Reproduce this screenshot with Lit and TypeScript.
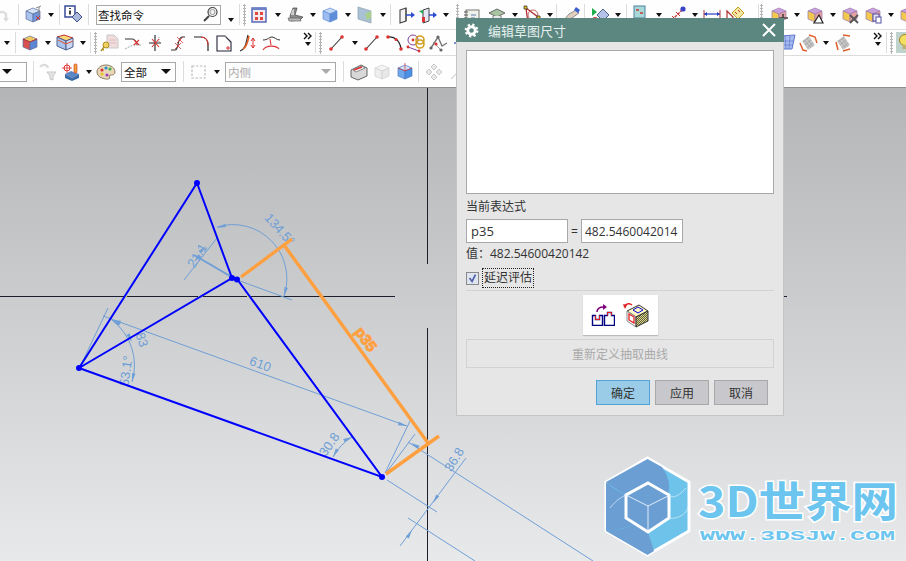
import { LitElement, html, css, svg } from 'lit';
import { customElement } from 'lit/decorators.js';

// little cube used by most of the toolbar glyphs
const cube = (top: string, left: string, right: string, line = '#5b6f9c') => svg`
  <path d="M2 5l7-3 7 3-7 3z" fill=${top} stroke=${line} stroke-width=".7"/>
  <path d="M2 5l7 3v8l-7-3z" fill=${left} stroke=${line} stroke-width=".7"/>
  <path d="M9 8l7-3v8l-7 3z" fill=${right} stroke=${line} stroke-width=".7"/>`;

const pcube = (extra: unknown) => svg`${cube('#c9a0dc', '#f2c94c', '#e8a0a0', '#9a7ab0')}${extra}`;

const ICONS: Record<string, unknown> = {
  undo: svg`<path d="M-3 9c3-4 7-4 9-1v5" fill="none" stroke="#dcdcdc" stroke-width="2.4"/><path d="M3 12h6l-3 4z" fill="#dcdcdc"/>`,
  cubedim: svg`${cube('#d5e2f8', '#a9c3ee', '#6f96da')}<path d="M12 2l5-2M15 1v8" stroke="#888" fill="none"/><path d="M12 10l4 4m0-4l-4 4" stroke="#c33" fill="none"/>`,
  info: svg`<rect x="1" y="0" width="10" height="11" fill="#fff" stroke="#2a3f8f" stroke-width="1.4"/><path d="M6 2v1M6 4.5v4" stroke="#111" stroke-width="1.6"/><path d="M8 11l5-5 5 5-5 5z" fill="#aab8dc" stroke="#41528a"/>`,
  cal: svg`<rect x="1" y="2" width="14" height="14" fill="#f3e9ee" stroke="#4a5fb4" stroke-width="1.4"/><rect x="1" y="2" width="14" height="2" fill="#6a80c8"/><path d="M4 6h3v3H4zM9 6h3v3H9zM4 11h3v3H4zM9 11h3v3H9z" fill="#e0483c"/>`,
  scan: svg`<path d="M4 10l3-8h4l-2 7 8 2-3 3-9 1z" fill="#8c8c8c" stroke="#444" stroke-width=".7"/><path d="M6 4l2-1v6H5z" fill="#cfcfcf"/><path d="M2 12h12l1 3H3z" fill="#b5b5b5" stroke="#555" stroke-width=".6"/>`,
  bbox: cube('#c4d8f4', '#9cbdee', '#5f8ed8', '#5f8ed8'),
  panel: svg`<path d="M2 1l13 4v12L2 13z" fill="#aac0d4" stroke="#8aa0b0" stroke-width=".7"/><path d="M9 8l6-3v7l-4 2z" fill="#a8d08c"/>`,
  door: svg`<path d="M2 4l6-2v13l-6 2z" fill="#f4f4f4" stroke="#444" stroke-width="1.1"/><path d="M8 2v13" stroke="#444"/><path d="M8 9h6" stroke="#2a4ad0" stroke-width="1.5"/><path d="M13 6l4 3-4 3z" fill="#2a4ad0"/>`,
  door2: svg`<path d="M4 4l6-2v13l-6 2z" fill="#e4e8f4" stroke="#444"/><path d="M0 5l4 3v-4z" fill="#1fae4c"/><rect x="3" y="11" width="3" height="5" fill="#d33"/><path d="M10 9h5" stroke="#2a4ad0" stroke-width="1.5"/><path d="M14 6l4 3-4 3z" fill="#2a4ad0"/>`,
  book: svg`<rect x="3" y="4" width="13" height="12" fill="#eef2e8" stroke="#777"/><path d="M1 6h4M1 9h4M1 12h4" stroke="#555"/><path d="M8 9h5M8 12h4" stroke="#5b7ab8"/>`,
  hat: svg`<path d="M1 7l8-4 8 4-8 4z" fill="#a8c4a0" stroke="#666"/><path d="M5 10v6h8v-6" fill="#e8e8e8" stroke="#777"/>`,
  tri: svg`<path d="M3 2l12 9-10 6z" fill="none" stroke="#b03030" stroke-width="1.3"/><circle cx="10" cy="9" r="5" fill="none" stroke="#c86060"/><path d="M1 0h3v3H1zM14 10h3v3h-3zM4 15h3v3H4z" fill="#e8c820" stroke="#222" stroke-width=".7"/>`,
  pen: svg`<path d="M1 14l5-6 7-4 3 3-7 5z" fill="#e0cfc0" stroke="#777" stroke-width=".8"/><path d="M13 1l4 3-2 3-4-3z" fill="#3a5fd0"/>`,
  diam: svg`<path d="M6 9l6-6 6 6-6 6z" fill="#b4c2e8" stroke="#50608f"/><path d="M1 2v8l5-4z" fill="#1fae4c"/><circle cx="4" cy="14" r="3" fill="#d33"/>`,
  grid: svg`<rect x="2" y="0" width="11" height="12" fill="#a8d8d8" stroke="#4a80a0"/><path d="M4 4h3M8 7h3" stroke="#c33" stroke-width="1.5"/><path d="M0 16h16" stroke="#d8b020" stroke-width="3" stroke-dasharray="2 1"/>`,
  axis: svg`<path d="M1 17L15 3" stroke="#c33" stroke-width="1.4" stroke-dasharray="3 1"/><path d="M4 10l4 4M8 6l4 4" stroke="#c33"/><circle cx="15" cy="3" r="2.6" fill="#3a44c0"/>`,
  ruler: svg`<path d="M1 8h16" stroke="#2a3fc0" stroke-width="1.2"/><path d="M1 4v8M17 4v8" stroke="#b03030"/><path d="M4 6l-3 2 3 2zM14 6l3 2-3 2z" fill="#2a3fc0"/><path d="M0 15h18" stroke="#d8b020" stroke-width="3" stroke-dasharray="2 1"/>`,
  ruler2: svg`<path d="M1 17V5l6 6v6" fill="none" stroke="#b03030" stroke-width="1.2"/><path d="M6 7l6-6 6 6-6 6z" fill="#f4e8a0" stroke="#c8a020"/><path d="M9 6l2 2M12 4l2 2" stroke="#c33"/>`,
  pc1: pcube(svg`<path d="M9 12h9M13 8v9" stroke="#444" stroke-width="1.6"/>`),
  pc2: pcube(svg`<path d="M13 9l4 8H8z" fill="#fff" stroke="#222" stroke-width="1.2"/>`),
  pc3: pcube(svg`<path d="M9 9l8 8m0-8l-8 8" stroke="#555" stroke-width="1.8"/>`),
  pc4: pcube(svg`<rect x="9" y="8" width="6" height="7" fill="#e4e4f8" stroke="#5050a0"/><rect x="12" y="11" width="5" height="6" fill="#fff" stroke="#5050a0"/>`),
  rbox: svg`${cube('#f0c860', '#d85050', '#5a86d4')}<path d="M2 5l7 3 7-3" stroke="#c03030" fill="none"/>`,
  rbox2: svg`<path d="M1 3l7-2 9 3-7 3z" fill="#f8d878" stroke="#c03030"/><path d="M1 3l9 4v9l-9-4z" fill="#a8c4ee" stroke="#50608f"/><path d="M10 7l7-3v9l-7 3z" fill="#c8d8f4" stroke="#50608f"/><path d="M2 6l8 4 7-3" stroke="#e05030" fill="none"/>`,
  key: svg`<path d="M6 1h7l4 4v9H6z" fill="#f0dcdc" stroke="#c8c8c8"/><path d="M8 6h7M8 9h7" stroke="#dcc0c0"/><circle cx="5" cy="11" r="3" fill="#f0d060" stroke="#b09020"/><path d="M3 13l-3 4M1 15l2 1" stroke="#b09020" stroke-width="1.4"/>`,
  c1: svg`<path d="M1 5h7c3 0 5 3 5 6" fill="none" stroke="#333"/><path d="M1 15l8-4h8" fill="none" stroke="#aaa" stroke-dasharray="2 1"/><path d="M10 6l5 5m0-5l-5 5" stroke="#d33" stroke-width="1.1"/>`,
  c2: svg`<path d="M8 1v16M2 9h12" stroke="#222" stroke-width="1.1"/><path d="M12 3v6" stroke="#999" stroke-dasharray="1 1"/><path d="M5 5l7 8M12 5l-7 8" stroke="#d33" stroke-width="1.1"/>`,
  c3: svg`<path d="M1 16h4c4 0 2-12 7-13h3" fill="none" stroke="#333" stroke-width="1.2"/><path d="M7 3l6 6m0-6l-6 6M5 9l6 6m0-6l-6 6" stroke="#d33" stroke-width=".8"/>`,
  c4: svg`<path d="M1 3h7c5 0 7 4 7 8v6" fill="none" stroke="#222" stroke-width="1.2"/><path d="M8 3c4 0 7 3 7 8" fill="none" stroke="#d33" stroke-width="1.2"/>`,
  c5: svg`<path d="M1 2h8l6 6v9H1z" fill="#fff" stroke="#223" stroke-width="1.1"/><path d="M9 2l6 8" stroke="#999" stroke-dasharray="1 1"/><path d="M10 14h4M12 12v4" stroke="#d33"/>`,
  c6: svg`<path d="M1 17c6-2 6-9 8-16" fill="none" stroke="#333" stroke-width="1.2"/><path d="M4 15c4-2 5-8 6-13" fill="none" stroke="#e06020" stroke-width="1.6"/><path d="M14 4v10M12 7l2-3 2 3M12 11l2 3 2-3" fill="none" stroke="#d33"/>`,
  c7: svg`<path d="M1 6c5 0 6-3 9-3s4 3 8 3" fill="none" stroke="#333"/><path d="M1 16c3-5 13-5 16-1" fill="none" stroke="#d33" stroke-width="1.1"/><path d="M8 5l1 6" stroke="#d33" stroke-width="1.1"/>`,
  line: svg`<path d="M3 15L14 3" stroke="#333" stroke-width="1.1"/><circle cx="3" cy="15" r="1.8" fill="#d33"/><circle cx="14" cy="3" r="1.8" fill="#d33"/>`,
  arc: svg`<path d="M2 3c7-1 12 4 13 12" fill="none" stroke="#222" stroke-width="1.3"/><circle cx="2" cy="3" r="1.8" fill="#d33"/><circle cx="10" cy="5.5" r="1.5" fill="#d33"/><circle cx="15" cy="15" r="1.8" fill="#d33"/>`,
  chain: svg`<circle cx="6" cy="6" r="5" fill="none" stroke="#8040a0"/><circle cx="6" cy="6" r="1.4" fill="#d33"/><circle cx="13" cy="6" r="4" fill="none" stroke="#d0a020" stroke-width="1.6"/><circle cx="13" cy="10" r="4" fill="none" stroke="#d0a020" stroke-width="1.6"/><path d="M1 13l11 4" stroke="#8040a0"/><circle cx="1" cy="13" r="1.4" fill="#d33"/><circle cx="12" cy="17" r="1.4" fill="#d33"/>`,
  poly: svg`<path d="M1 14l7-11 4 9 5-3" fill="none" stroke="#777" stroke-width="1.4"/><path d="M3 8l8 8" stroke="#999"/><circle cx="8" cy="3" r="1.6" fill="#666"/><circle cx="1" cy="14" r="1.6" fill="#666"/><circle cx="11" cy="16" r="1.6" fill="#666"/><circle cx="6" cy="10" r="1.6" fill="#d33"/>`,
  mesh: svg`<path d="M2 2l15-1-3 14H5z" fill="#a8bcf0" stroke="#6078d0"/><path d="M7 2l1 13M12 2l-1 13M3 7h13M4 11h11" stroke="#6078d0" stroke-width=".7"/>`,
  or1: svg`<path d="M3 7l7-5 6 9-7 5z" fill="#c8c8c8"/><path d="M5 6l7 8M8 4l6 9M6 11l6-5M4 8l6-5M8 14l6-5" stroke="#999" stroke-width=".6"/><path d="M1 9l3 7 4 1M10 1l6 2 2 6" fill="none" stroke="#e06030" stroke-width="1.5"/>`,
  or2: svg`<path d="M3 7l7-5 6 9-7 5z" fill="#c8c8c8"/><path d="M5 6l7 8M8 4l6 9M6 11l6-5M4 8l6-5M8 14l6-5" stroke="#999" stroke-width=".6"/><path d="M2 8l2 8M9 1l7 1M9 17l7-2" fill="none" stroke="#e06030" stroke-width="1.5"/>`,
  bulb: svg`<circle cx="9" cy="7" r="5.5" fill="#f4e060" stroke="#a08820"/><rect x="6.5" y="12" width="5" height="4" fill="#c0b070"/>`,
  filter: svg`<path d="M1 4c2-3 7-3 8 1" fill="none" stroke="#dcdcdc" stroke-width="2.2"/><path d="M8 9h9l-3 4v4l-3-1v-3z" fill="#e4e4e4" stroke="#c8c8c8"/>`,
  target: svg`<path d="M3 11l6-3 8 3-7 4z" fill="#5a86c4"/><path d="M3 11v4l7 3v-3zM10 15v3l7-3v-4z" fill="#3a6aa8"/><circle cx="5" cy="5" r="3" fill="none" stroke="#d33"/><path d="M5 0v10M0 5h10" stroke="#d33" stroke-width=".8"/><rect x="12" y="1" width="3" height="9" rx="1" fill="#f0a030" stroke="#c33" stroke-width=".6"/>`,
  palette: svg`<path d="M9 2c5 0 9 3 9 7 0 3-3 3-4 3-2 0-2 2-1 3-2 2-5 1-8 0-3-1-5-3-5-6 0-4 4-7 9-7z" fill="#e8d8b8" stroke="#8a7a60"/><circle cx="5" cy="7" r="1.6" fill="#d33"/><circle cx="9" cy="5" r="1.6" fill="#2a8ad0"/><circle cx="13" cy="6" r="1.6" fill="#3ab04c"/><circle cx="5" cy="11" r="1.6" fill="#e8c020"/><circle cx="10" cy="12" r="1.6" fill="#a040c0"/>`,
  dashrect: svg`<rect x="2" y="3" width="13" height="12" fill="none" stroke="#bbb" stroke-width="1.2" stroke-dasharray="2.5 1.5"/>`,
  solid: svg`<path d="M1 7l10-5 6 3v8l-9 4-7-3z" fill="#d8d8d8" stroke="#666"/><path d="M3 7l9-4 3 2-9 4z" fill="#fff" stroke="#888"/><path d="M4 7l8-3" stroke="#d33" stroke-width="1.4"/>`,
  ghost: cube('#f4f4f4', '#eeeeee', '#e8e8e8', '#cfcfcf'),
  bluetop: svg`${cube('#cfe0fa', '#6fa8ec', '#4a90e4', '#5078c0')}<path d="M9 0v8M2 5l7 3 7-3" stroke="#d33" stroke-width=".7" fill="none"/>`,
  move: svg`<path d="M9 1l3 3-3 3-3-3zM9 11l3 3-3 3-3-3zM1 9l3-3 3 3-3 3zM11 9l3-3 3 3-3 3z" fill="#e8e8e8" stroke="#c8c8c8"/>`,
  ghostline: svg`<path d="M3 16L14 5" stroke="#d8d8d8" stroke-width="1.2"/>`,
  dash: svg`<path d="M1 9h16" stroke="#4060c8" stroke-width="1.4"/>`,
};

// row tokens: number = gap, '|' = separator, ':' = grip, 'i-' button, 'c-' button+caret, 'n-' narrow button
const ROW1: unknown[] = ['n-undo', '|', 3, 'c-cubedim', 2, '|', 2, 'i-info', 3, '|', 7, 'search', 4, 'caret-low', 2, '|', 3, ':', 3,
  'c-cal', 'c-scan', 'c-bbox', 'c-panel', 1, '|', 5, 'n-door', 'c-door2', 4, ':', 2, 'i-book', 2, 'c-hat', 'c-tri', '|', 4,
  'i-pen', '|', 4, 'c-diam', 2, '|', 3, 'c-grid', 1, 'c-axis', 'i-ruler', 'i-ruler2', 11, '|', 1, ':', 5,
  'c-pc1', 1, 'c-pc2', 'i-pc3', 'c-pc4', 'i-pc1'];
const ROW2: unknown[] = [1, 'caret', 2, '|', 3, 'c-rbox', 'c-rbox2', 1, '|', 3, ':', 2, 'i-key', 'i-c1', 'i-c2', 'i-c3', 'i-c4', 'i-c5', 'i-c6', 'i-c7', 19,
  'more', 1, '|', 3, ':', 4, 'c-line', 'i-line', 'n-arc', 'i-chain', 'i-poly', 'i-dash', 302, 'n-mesh', 'c-or1', 'i-or2', 17,
  'more', 2, '|', 3, ':', 2, 'selected'];
const ROW3: unknown[] = ['combo-', 6, '|', 3, 'i-filter', 'c-target', 'i-palette', 3, 'combo-全部', 7, '|', 4, 'c-dashrect', 2, 'combo-内侧', 7, '|', 4,
  'i-solid', 'i-ghost', 'i-bluetop', 1, '|', 4, 'i-move', 'i-ghostline'];

const DIM = '#6f9fd6';

// arrow head, tip at (x, y), pointing away from (fx, fy)
const arrow = (x: number, y: number, fx: number, fy: number) => {
  const a = Math.atan2(y - fy, x - fx);
  const p = (d: number) => `${x - 9 * Math.cos(a + d)},${y - 9 * Math.sin(a + d)}`;
  return svg`<polygon points="${x},${y} ${p(0.2)} ${p(-0.2)}" fill=${DIM}/>`;
};

const label = (x: number, y: number, rot: number, t: string) =>
  svg`<text class="dim" x=${x} y=${y} transform="rotate(${rot} ${x} ${y})" text-anchor="middle" dominant-baseline="middle">${t}</text>`;

const DIM_LINES = [
  'M184 280L217 238', 'M240 281L292 300', 'M108 308L80 367', 'M103 316L407 426', 'M411 419L385 473', 'M415 434L386 473',
  'M408 442L593 561', 'M387 480L437 512', 'M408 518L475 561', 'M466 458L400 546',
  'M217 227A54 54 0 0 1 284 296', 'M112 320A57 57 0 0 1 132 382', 'M333 457A54 54 0 0 1 352 437',
];

@customElement('sketch-canvas')
class SketchCanvas extends LitElement {
  static styles = css`
    :host {
      display: block;
      flex: 1;
      min-height: 0;
      background: linear-gradient(#b4b5b7, #e8e9eb);
    }
    svg {
      display: block;
    }
    .dim {
      font: 13px "Liberation Sans", sans-serif;
      fill: #6f9fd6;
    }
    .tag {
      font: bold 15px "Liberation Sans", sans-serif;
      fill: #ffa040;
      stroke: #ffa040;
      stroke-width: 1px;
    }
    .logo-big {
      font: bold 42px "Noto Sans CJK SC", sans-serif;
      fill: #6cc5ee;
      stroke: #fff;
      stroke-width: 3px;
      paint-order: stroke;
    }
    .logo-url {
      font: bold 13px "Liberation Mono", monospace;
      fill: #6cc5ee;
      stroke: #fff;
      stroke-width: 1.5px;
      paint-order: stroke;
    }
  `;

  render() {
    return html`
      <svg width="906" height="473" viewBox="0 88 906 473">
        <g stroke="#1c1e30" stroke-width="1" fill="none">
          <path d="M0 296.5H395M459 296.5H787M427.5 88V264M427.5 328V561"/>
        </g>
        <path d="M124 296.5h3M198 296.5h5M247 296.5h4" stroke="#f0e040"/>
        <g stroke=${DIM} stroke-width="1" fill="none">
          ${DIM_LINES.map(d => svg`<path d=${d}/>`)}
          <path d="M194 255L230 276" stroke-width="2"/>
        </g>
        ${arrow(217, 228, 230, 224)} ${arrow(284, 296, 287, 284)}
        ${arrow(206, 246, 198, 254)} ${arrow(194, 262, 201, 254)}
        ${arrow(112, 320, 122, 326)} ${arrow(132, 342, 128, 334)} ${arrow(132, 382, 134, 372)}
        ${arrow(407, 426, 397, 423)} ${arrow(112, 320, 122, 323)}
        ${arrow(333, 457, 338, 448)} ${arrow(352, 437, 343, 441)}
        ${arrow(411, 443, 420, 448)} ${arrow(433, 503, 438, 495)} ${arrow(412, 530, 407, 538)}
        ${label(198, 256, -58, '21.1')} ${label(279, 230, 48, '134.5°')} ${label(260, 365, 20, '610')}
        ${label(141, 340, 72, '83')} ${label(127, 371, -82, '53.1°')}
        ${label(330, 445, -55, '30.8')} ${label(455, 460, -58, '36.8')}

        <g stroke="#0000ff" stroke-width="2" fill="none">
          <path d="M197 183L79 368L232 278L197 183M237 279L382 477L79 368"/>
        </g>
        <g fill="#0000ff">
          <circle cx="197" cy="183" r="3"/><circle cx="79" cy="368" r="3"/><circle cx="232" cy="278" r="3"/>
          <circle cx="237" cy="279.5" r="3"/><circle cx="382" cy="477" r="3"/>
        </g>
        <g stroke="#ffa040" stroke-width="3.400" fill="none">
          <path d="M241 277L292 239M284 245L428 443M386 474L439 436"/>
        </g>
        <text class="tag" x="365" y="340" text-anchor="middle" dominant-baseline="middle" transform="rotate(54 365 340)">p35</text>

        <!-- 3D世界网 watermark -->
        <path d="M647.5 458L689 482V531L647.5 555L606 531V482Z" fill="#6ec3ea" stroke="#fff" stroke-width="3"/>
        <path d="M606 482L647.5 459L662 467C670 478 670 488 668 494L648 483L626 495C618 490 611 486 606 482Z" fill="#6b9fd4"/>
        <path d="M606 482C612 488 620 492 626 495V518L634 524C622 530 612 530 606 531Z" fill="#6b9fd4"/>
        <path d="M606 531L612 530C620 530 628 527 634 524L648 532L654 551L647.5 555Z" fill="#6b9fd4"/>
        <path d="M648 483L669 495V518L648 532L626 518V495Z" fill="#6b9fd4" stroke="#fff" stroke-width="3"/>
        <path d="M628 496L648 506L668 496M648 506V530" fill="none" stroke="#fff" stroke-width=".8"/>
        <path d="M610 508C618 498 624 496 626 495M669 496C676 500 684 490 686 488M668 518C680 520 688 512 688 506" fill="none" stroke="#d8ecf8" stroke-width=".7"/>
        <text class="logo-big" x="698" y="517" textLength="200" lengthAdjust="spacingAndGlyphs">3D世界网</text>
        <text class="logo-url" x="700" y="540" textLength="195" lengthAdjust="spacingAndGlyphs">WWW.3DSJW.COM</text>
      </svg>
    `;
  }
}

@customElement('sketch-dialog')
class SketchDialog extends LitElement {
  static styles = css`
    :host {
      position: absolute;
      left: 456px;
      top: 18px;
      width: 328px;
      height: 398px;
      box-sizing: border-box;
      border: 1px solid #c4c4c4;
      border-top: 0;
      background: #e6e6e6;
      font: 12px "Open Sans", "Noto Sans CJK SC", sans-serif;
      color: #333;
      display: flex;
      flex-direction: column;
    }
    .title {
      height: 24px;
      margin: 0 -1px;
      flex: none;
      background: #5c8780;
      color: #e4f0ee;
      display: flex;
      align-items: center;
      padding: 0 8px;
      font-size: 13px;
      gap: 9px;
    }
    .title span {
      flex: 1;
    }
    .body {
      display: flex;
      flex-direction: column;
      padding: 8px 9px 0;
    }
    .area {
      height: 144px;
      flex: none;
      background: #fff;
      border: 1px solid #a8a8a8;
      box-sizing: border-box;
    }
    .lbl {
      margin-top: 6px;
      line-height: 14px;
    }
    .expr {
      margin-top: 5px;
      display: flex;
      align-items: center;
      height: 24px;
    }
    .field {
      box-sizing: border-box;
      height: 24px;
      border: 1px solid #a8a8a8;
      background: #fff;
      display: flex;
      align-items: center;
      white-space: nowrap;
      overflow: hidden;
    }
    .name {
      width: 102px;
      padding-left: 4px;
      font-size: 13px;
    }
    .eq {
      width: 13px;
      text-align: center;
    }
    .val {
      width: 102px;
      padding-left: 3px;
    }
    .result {
      margin-top: 4px;
      line-height: 14px;
    }
    .check {
      margin-top: 7px;
      height: 20px;
      display: flex;
      align-items: center;
      gap: 3px;
    }
    .box {
      width: 13px;
      height: 13px;
      box-sizing: border-box;
      border: 1px solid #8a8a8a;
      background: #dfe5f0;
      display: block;
    }
    .focus {
      border: 1px dotted #222;
      padding: 2px 1px;
      line-height: 14px;
    }
    .rule {
      margin-top: 2px;
      border-top: 1px solid #d2d2d2;
    }
    .tile {
      margin: 4px auto 0;
      width: 75px;
      height: 40px;
      background: #fff;
      box-shadow: 0 1px 1px #bbb;
      display: flex;
      align-items: center;
      justify-content: center;
      gap: 8px;
    }
    .redo {
      margin-top: 4px;
      height: 29px;
      box-sizing: border-box;
      border: 1px solid #d2d2d2;
      color: #aaa;
      display: flex;
      align-items: center;
      justify-content: center;
    }
    .actions {
      margin-top: 12px;
      padding-right: 6px;
      display: flex;
      justify-content: flex-end;
      gap: 5px;
    }
    .btn {
      width: 54px;
      height: 25px;
      box-sizing: border-box;
      border: 1px solid #a8a8a8;
      background: #c8c8cc;
      display: flex;
      align-items: center;
      justify-content: center;
      font-size: 12px;
    }
    .btn.primary {
      background: #9acce8;
      border-color: #4fa3d8;
    }
  `;

  render() {
    return html`
      <div class="title">
        <svg width="15" height="15" viewBox="0 0 16 16" fill="none" stroke="#fff">
          <circle cx="8" cy="8" r="4" stroke-width="3"/>
          <circle cx="8" cy="8" r="6.2" stroke-width="2.4" stroke-dasharray="2.4 2.47"/>
        </svg>
        <span>编辑草图尺寸</span>
        <svg width="14" height="14" viewBox="0 0 14 14" stroke="#fff" stroke-width="2"><path d="M1 1l12 12M13 1L1 13"/></svg>
      </div>
      <div class="body">
        <div class="area"></div>
        <div class="lbl">当前表达式</div>
        <div class="expr">
          <div class="field name">p35</div>
          <div class="eq">=</div>
          <div class="field val">482.5460042014</div>
        </div>
        <div class="result">值：482.54600420142</div>
        <div class="check">
          <svg class="box" viewBox="0 0 13 13"><path d="M3 6l3 4 4-8" fill="none" stroke="#4a5fa8" stroke-width="2"/></svg>
          <span class="focus">延迟评估</span>
        </div>
        <div class="rule"></div>
        <div class="tile">
          <svg width="24" height="22" viewBox="0 0 24 22" fill="none">
            <path d="M1.5 11.5h3v4h4v-4h3v10h-10zM13.500 11.500h3v-3h4v3h3v10h-10z" stroke="#000080" stroke-width="1.400"/>
            <path d="M4.500 11.500v4h4v-4M16.500 11.500v-3h4v3" stroke="#e02020"/>
            <path d="M6 8c0-4 3-5 7-5" stroke="#800080" stroke-width="1.500"/>
            <path d="M12 0l4 3-4 3z" fill="#800080"/>
          </svg>
          <svg width="26" height="26" viewBox="0 0 26 26" fill="none">
            <defs>
              <pattern id="dither" width="2" height="2" patternUnits="userSpaceOnUse">
                <rect width="2" height="2" fill="#e8e070"/>
                <rect width="1" height="1" fill="#555"/>
                <rect x="1" y="1" width="1" height="1" fill="#555"/>
              </pattern>
            </defs>
            <path d="M4 9l12-6 9 6-12 6z" fill="#fff8c0" stroke="#333"/>
            <path d="M4 9l9 6v10l-9-6z" fill="#fff" stroke="#888"/>
            <path d="M13 15l12-6v10l-12 6z" fill="url(#dither)" stroke="#333"/>
            <path d="M10 8l5-3 5 3-5 3z" stroke="#0000e0"/>
            <path d="M6 12l5 3v6l-5-3z" stroke="#e02020" stroke-width="1.300"/>
            <path d="M1 5c2-4 6-4 8-2" stroke="#e02020" stroke-width="1.400"/>
            <path d="M0 2l4 1-2 4z" fill="#e02020"/>
          </svg>
        </div>
        <div class="redo">重新定义抽取曲线</div>
        <div class="actions">
          <div class="btn primary">确定</div>
          <div class="btn">应用</div>
          <div class="btn">取消</div>
        </div>
      </div>
    `;
  }
}

@customElement('app-root')
export class AppRoot extends LitElement {
  static styles = css`
    :host {
      display: flex;
      flex-direction: column;
      position: relative;
      width: 906px;
      height: 561px;
      overflow: hidden;
      font-family: "Noto Sans CJK SC", sans-serif;
    }
    .row {
      display: flex;
      align-items: center;
      flex: none;
      background: #fefefe;
      border-bottom: 1px solid #dcdcdc;
      overflow: hidden;
    }
    .r1 {
      height: 29px;
    }
    .r2 {
      height: 25px;
    }
    .r3 {
      height: 31px;
      border-bottom: 1px solid #8f8f8f;
    }
    .row > * {
      flex: none;
    }
    .tool {
      width: 23px;
      padding-left: 2px;
      box-sizing: border-box;
      display: flex;
      align-items: center;
    }
    .tool.narrow {
      width: 21px;
    }
    .tool.narrow.first {
      width: 18px;
      padding-left: 0;
      overflow: hidden;
    }
    .tool svg {
      flex: none;
      display: block;
      overflow: visible;
    }
    .tool.narrow.first svg {
      overflow: hidden;
    }
    .sep {
      width: 1px;
      height: 21px;
      background: #dcdcdc;
    }
    .grip {
      width: 3px;
      height: 22px;
      background: radial-gradient(circle, #b4b4b4 1px, transparent 1.2px) 0 0 / 3px 3px;
    }
    .caret {
      width: 12px;
      display: flex;
      justify-content: center;
    }
    .caret::after {
      content: "";
      border: 3.5px solid transparent;
      border-top: 4px solid #111;
      border-bottom: 0;
    }
    .caret.low {
      padding-top: 10px;
    }
    .drop {
      display: flex;
      align-items: center;
    }
    .search {
      width: 125px;
      height: 20px;
      box-sizing: border-box;
      border: 1px solid #a8a8a8;
      display: flex;
      align-items: center;
      justify-content: space-between;
      padding: 0 1px;
      font-size: 11.5px;
      color: #111;
    }
    .more {
      width: 12px;
      height: 22px;
      display: flex;
      flex-direction: column;
      align-items: center;
      gap: 2px;
    }
    .more svg {
      display: block;
    }
    .more::after {
      content: "";
      border: 3.5px solid transparent;
      border-top: 4px solid #111;
      border-bottom: 0;
    }
    .selected {
      width: 11px;
      height: 21px;
      margin-left: 1px;
      background: #c0d2cc;
      overflow: hidden;
    }
    .combo {
      height: 20px;
      box-sizing: border-box;
      border: 1px solid #a8a8a8;
      display: flex;
      align-items: center;
      justify-content: space-between;
      padding: 0 4px 0 2px;
      font-size: 11.5px;
      color: #111;
    }
    .combo::after {
      content: "";
      border: 5px solid transparent;
      border-top: 5px solid #111;
      border-bottom: 0;
    }
    .combo.all {
      width: 55px;
    }
    .combo.blank {
      width: 28px;
      margin-left: -1px;
    }
    .combo.off {
      width: 111px;
      color: #aaa;
    }
    .combo.off::after {
      border-top-color: #aaa;
    }
  `;

  private icon(name: string) {
    return html`<svg width="18" height="18" viewBox="0 0 18 18">${ICONS[name]}</svg>`;
  }

  private item(tok: unknown) {
    if (typeof tok === 'number') return html`<i style="width:${tok}px"></i>`;
    const t = tok as string;
    if (t === '|') return html`<div class="sep"></div>`;
    if (t === ':') return html`<div class="grip"></div>`;
    if (t === 'caret') return html`<div class="caret"></div>`;
    if (t === 'caret-low') return html`<div class="caret low"></div>`;
    if (t === 'search') {
      return html`<div class="search">查找命令
        <svg width="17" height="17" viewBox="0 0 17 17" fill="none" stroke="#444">
          <circle cx="10.500" cy="6" r="4.500" fill="#f4f4f4" stroke-width="1.200"/>
          <circle cx="10.500" cy="6" r="2.500" stroke="#999"/>
          <path d="M7 10l-5 5" stroke-width="2"/>
        </svg></div>`;
    }
    if (t === 'more') {
      return html`<div class="more">
        <svg width="10" height="8" viewBox="0 0 10 8" fill="none" stroke="#111" stroke-width="1.400"><path d="M1 1l3 3-3 3M5 1l3 3-3 3"/></svg>
      </div>`;
    }
    if (t === 'selected') return html`<div class="selected">${this.icon('bulb')}</div>`;
    if (t.startsWith('combo-')) {
      const text = t.slice(6);
      const kind = text === '全部' ? 'all' : text === '内侧' ? 'off' : 'blank';
      return html`<div class="combo ${kind}">${text}</div>`;
    }
    const name = t.slice(2);
    if (t[0] === 'c') return html`<div class="drop"><div class="tool">${this.icon(name)}</div><div class="caret"></div></div>`;
    if (t[0] === 'n') return html`<div class="tool narrow ${name === 'undo' ? 'first' : ''}">${this.icon(name)}</div>`;
    return html`<div class="tool">${this.icon(name)}</div>`;
  }

  render() {
    return html`
      <div class="row r1">${ROW1.map(t => this.item(t))}</div>
      <div class="row r2">${ROW2.map(t => this.item(t))}</div>
      <div class="row r3">${ROW3.map(t => this.item(t))}</div>
      <sketch-canvas></sketch-canvas>
      <sketch-dialog></sketch-dialog>
    `;
  }
}
